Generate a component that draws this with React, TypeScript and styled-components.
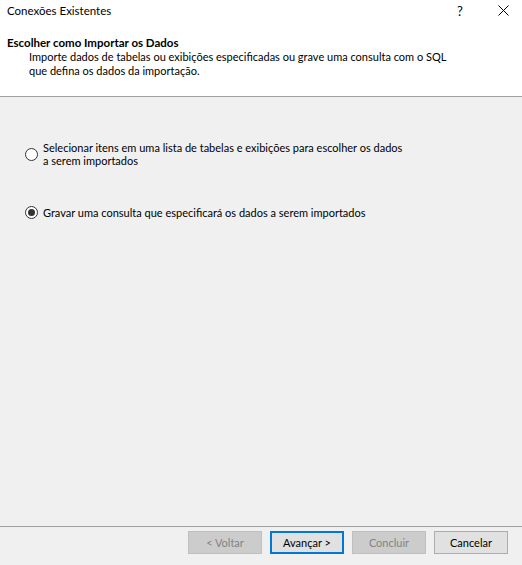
import React from "react";
import styled, { createGlobalStyle } from "styled-components";

const Global = createGlobalStyle`
  html, body { margin: 0; padding: 0; }
  body {
    width: 522px;
    height: 565px;
    overflow: hidden;
    background: #f0f0f0;
    font-family: Lato, "Noto Sans", sans-serif;
    font-size: 11px;
    color: #000;
  }
  #root { height: 565px; }
`;

const Dialog = styled.div`
  display: flex;
  flex-direction: column;
  width: 522px;
  height: 565px;
  background: #f0f0f0;
`;

const TitleBar = styled.div`
  display: flex;
  align-items: center;
  height: 30px;
  background: #fff;
  padding-left: 7px;
  box-sizing: border-box;
`;

const Title = styled.div`
  flex: 1;
  font-size: 11.5px;
  margin-top: -9px;
`;

const TitleButton = styled.div<{ $w: number }>`
  width: ${(p) => p.$w}px;
  height: 30px;
  display: flex;
  align-items: center;
  justify-content: center;
  margin-top: -9px;
  font-size: 13px;
`;

const Header = styled.div`
  background: #fff;
  height: 67px;
  box-sizing: border-box;
  padding: 6px 7px 0;
  border-bottom: 1px solid #a0a0a0;
`;

const Heading = styled.div`
  font-weight: 700;
  font-size: 11.5px;
  line-height: 14px;
`;

const Sub = styled.div`
  padding-left: 22px;
  line-height: 14px;
`;

const Content = styled.div`
  flex: 1;
  padding: 44px 0 0 25px;
  display: flex;
  flex-direction: column;
  gap: 39px;
`;

const Option = styled.label`
  display: flex;
  align-items: center;
  gap: 5px;
`;

const Radio = styled.span<{ $on?: boolean }>`
  width: 13px;
  height: 13px;
  box-sizing: border-box;
  border: 1px solid #333;
  border-radius: 50%;
  background: #fff;
  display: flex;
  align-items: center;
  justify-content: center;
  flex: none;
  &::after {
    content: "";
    display: ${(p) => (p.$on ? "block" : "none")};
    width: 7px;
    height: 7px;
    border-radius: 50%;
    background: #333;
  }
`;

const OptionText = styled.div`
  line-height: 13px;
`;

const Footer = styled.div`
  border-top: 1px solid #a0a0a0;
  height: 39px;
  box-sizing: border-box;
  display: flex;
  justify-content: flex-end;
  gap: 8px;
  padding: 4px 14px 0 0;
`;

const Button = styled.button<{ $primary?: boolean }>`
  width: 74px;
  height: 23px;
  box-sizing: border-box;
  font-family: inherit;
  font-size: 11px;
  padding: 0;
  border: ${(p) => (p.$primary ? "2px solid #0078d7" : "1px solid #adadad")};
  background: #e1e1e1;
  color: #000;
  &:disabled {
    background: #cccccc;
    border-color: #bfbfbf;
    color: #838383;
  }
`;

export default function App() {
  return (
    <Dialog>
      <Global />
      <TitleBar>
        <Title>Conexões Existentes</Title>
        <TitleButton $w={48}>?</TitleButton>
        <TitleButton $w={38}>
          <svg width="11" height="11" viewBox="0 0 11 11">
            <path d="M0.5 0.5 L10.5 10.5 M10.5 0.5 L0.5 10.5" stroke="#000" strokeWidth="1" />
          </svg>
        </TitleButton>
      </TitleBar>
      <Header>
        <Heading>Escolher como Importar os Dados</Heading>
        <Sub>
          Importe dados de tabelas ou exibições especificadas ou grave uma consulta com o SQL
          <br />
          que defina os dados da importação.
        </Sub>
      </Header>
      <Content>
        <Option>
          <Radio />
          <OptionText>
            Selecionar itens em uma lista de tabelas e exibições para escolher os dados
            <br />a serem importados
          </OptionText>
        </Option>
        <Option>
          <Radio $on />
          <OptionText>Gravar uma consulta que especificará os dados a serem importados</OptionText>
        </Option>
      </Content>
      <Footer>
        <Button disabled>&lt; Voltar</Button>
        <Button $primary>Avançar &gt;</Button>
        <Button disabled>Concluir</Button>
        <Button>Cancelar</Button>
      </Footer>
    </Dialog>
  );
}
